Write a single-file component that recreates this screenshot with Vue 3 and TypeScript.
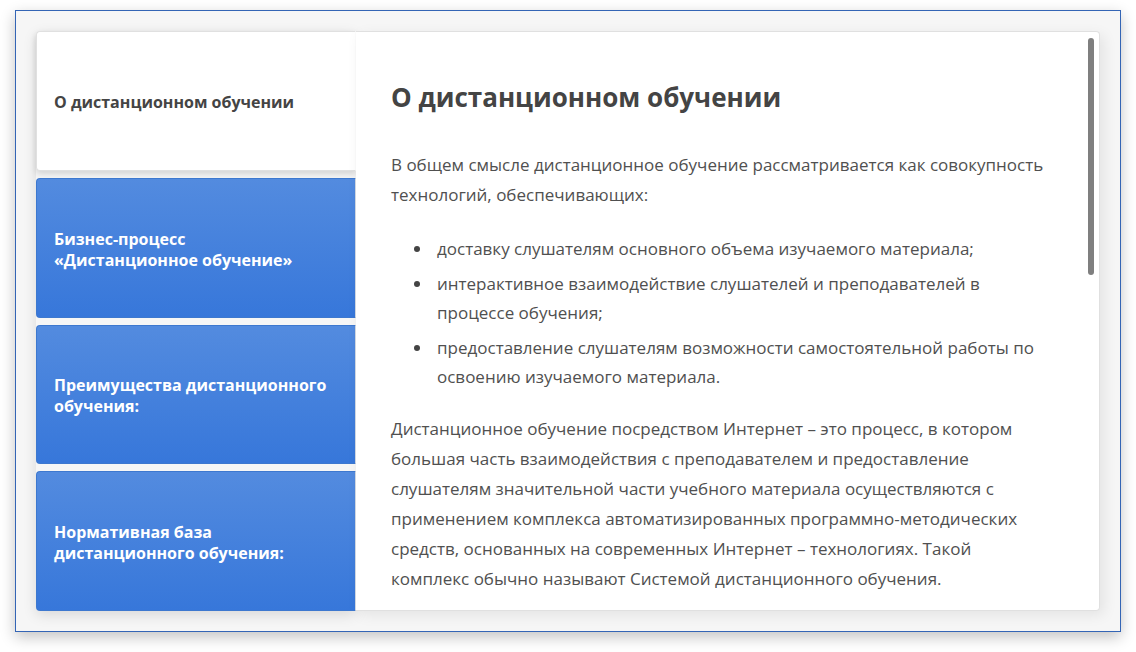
<script setup lang="ts">
import { ref } from 'vue'

const tabs: string[] = [
  'О дистанционном обучении',
  'Бизнес-процесс «Дистанционное обучение»',
  'Преимущества дистанционного обучения:',
  'Нормативная база дистанционного обучения:',
]
const active = ref(0)

const goals: string[] = [
  'доставку слушателям основного объема изучаемого материала;',
  'интерактивное взаимодействие слушателей и преподавателей в процессе обучения;',
  'предоставление слушателям возможности самостоятельной работы по освоению изучаемого материала.',
]
</script>

<template>
  <main class="frame">
    <div class="tabs" role="tablist" aria-orientation="vertical">
      <button
        v-for="(tab, i) in tabs"
        :id="`tab-${i}`"
        :key="tab"
        type="button"
        role="tab"
        class="tab"
        :class="{ active: active === i }"
        :aria-selected="active === i"
        aria-controls="panel"
        @click="active = i"
      >
        {{ tab }}
      </button>
    </div>
    <section id="panel" class="panel" role="tabpanel" :aria-labelledby="`tab-${active}`">
      <h2>{{ tabs[active] }}</h2>
      <template v-if="active === 0">
        <p>
          В общем смысле дистанционное обучение рассматривается как совокупность технологий,
          обеспечивающих:
        </p>
        <ul>
          <li v-for="goal in goals" :key="goal">{{ goal }}</li>
        </ul>
        <p>
          Дистанционное обучение посредством Интернет – это процесс, в котором большая часть
          взаимодействия с преподавателем и предоставление слушателям значительной части учебного
          материала осуществляются с применением комплекса автоматизированных
          программно-методических средств, основанных на современных Интернет – технологиях. Такой
          комплекс обычно называют Системой дистанционного обучения.
        </p>
      </template>
      <div class="scroll-thumb" aria-hidden="true"></div>
    </section>
  </main>
</template>

<style>
body {
  margin: 0;
  background: #fff;
}
</style>

<style scoped>
.frame {
  box-sizing: border-box;
  display: flex;
  min-height: calc(100vh - 30px);
  margin: 10px 15px 20px;
  padding: 20px;
  border: 1px solid #3465b5;
  background: #f6f6f6;
  box-shadow: 0 5px 14px rgba(0, 0, 0, 0.24);
  font-family: 'Open Sans', 'Noto Sans', sans-serif;
  color: #444;
}

.tabs {
  flex: 0 0 320px;
  display: grid;
  grid-auto-rows: 1fr;
  gap: 7px;
  border-radius: 4px;
  box-shadow: 0 4px 14px rgba(0, 0, 0, 0.12);
}

.tab {
  margin: 0;
  padding: 4px 28px 0 17px;
  border: 1px solid #3d78cf;
  border-right-color: #d5dbe4;
  border-radius: 4px 0 0 4px;
  background: linear-gradient(#538bdf, #3777da);
  color: #fff;
  font: 700 16px/21px 'Open Sans', 'Noto Sans', sans-serif;
  text-align: left;
  cursor: pointer;
}

.tab.active {
  border-color: #e0e0e0;
  border-right-color: #fcfcfc;
  background: #fff;
  color: #444;
  box-shadow: 0 3px 6px rgba(0, 0, 0, 0.14);
}

.panel {
  position: relative;
  box-sizing: border-box;
  flex: 1;
  min-width: 0;
  padding: 48px 50px 16px 35px;
  border: 1px solid #e0e0e0;
  border-left: 0;
  border-radius: 0 4px 4px 0;
  background: #fff;
  box-shadow: 4px 4px 14px rgba(0, 0, 0, 0.08);
  color: #505050;
  font-size: 17px;
  line-height: 30px;
}

h2 {
  margin: 0 0 36px;
  color: #444;
  font-size: 26px;
  font-weight: 700;
  line-height: 34px;
}

p {
  margin: 0;
}

ul {
  display: grid;
  gap: 6px;
  margin: 24px 0 23px;
  padding-left: 23px;
  line-height: 29px;
  list-style: none;
}

li {
  display: grid;
  grid-template-columns: 23px 1fr;
}

li::before {
  content: '';
  width: 6px;
  height: 6px;
  margin-top: 12px;
  border-radius: 50%;
  background: #444;
}

.scroll-thumb {
  position: absolute;
  top: 6px;
  right: 5px;
  width: 6px;
  height: 237px;
  border-radius: 3px;
  background: #7f7f7f;
}
</style>
